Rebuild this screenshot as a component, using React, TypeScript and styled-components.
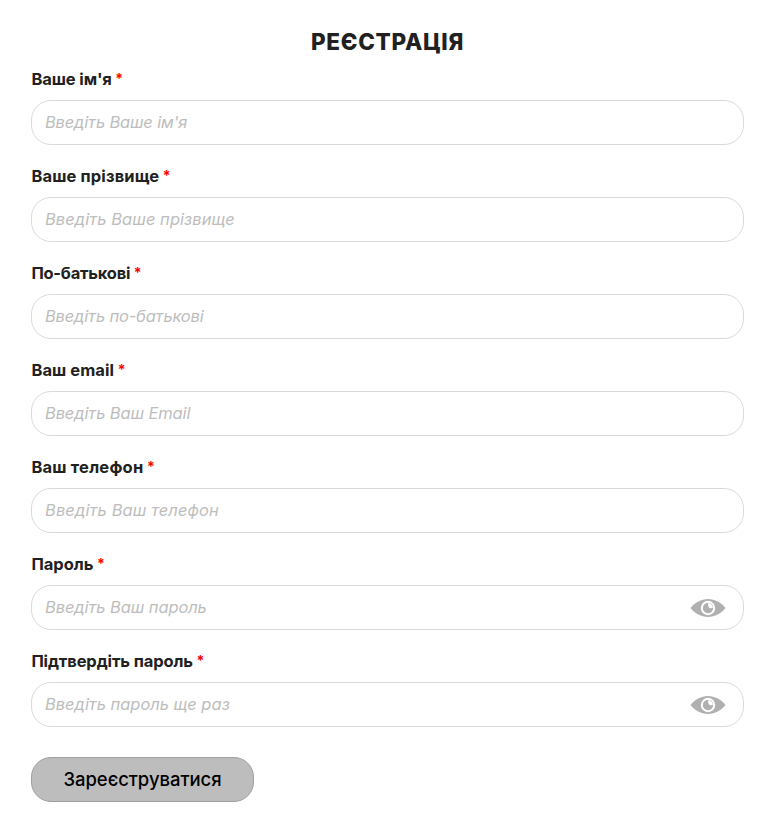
import React from "react";
import styled, { createGlobalStyle } from "styled-components";

const GlobalStyle = createGlobalStyle`
  *, *::before, *::after { box-sizing: border-box; }
  body {
    margin: 0;
    background: #fff;
    color: #212121;
    font-family: Inter, "Noto Sans", sans-serif;
  }
`;

const Form = styled.form`
  display: flex;
  flex-direction: column;
  width: 762px;
  height: 832px;
  padding: 27px 18px 0 31px;
`;

const Title = styled.h1`
  margin: 0;
  height: 30px;
  line-height: 29px;
  font-size: 22.5px;
  font-weight: 850;
  text-align: center;
  white-space: nowrap;
  letter-spacing: 0.7px;
`;

const Field = styled.div`
  display: flex;
  flex-direction: column;
  height: 97px;
`;

const Label = styled.label<{ $spacing: number }>`
  display: flex;
  gap: 3.5px;
  height: 43px;
  padding: 10px 0 0 0.4px;
  line-height: 24px;
  font-size: 16.5px;
  font-weight: 650;
  white-space: nowrap;
  letter-spacing: ${(p) => p.$spacing}px;
`;

const Required = styled.span`
  color: #ff0000;
  font-size: 14px;
  line-height: 23px;
  letter-spacing: 0;
`;

const InputBox = styled.div`
  display: flex;
  align-items: center;
  height: 45px;
  padding: 0 17px 0 13px;
  border: 1px solid #dadada;
  border-radius: 20px;
  background: #fff;
`;

const Input = styled.input<{ $spacing: number }>`
  flex: 1;
  min-width: 0;
  height: 43px;
  padding: 0 0 2px;
  border: 0;
  outline: 0;
  background: transparent;
  color: #212121;
  font-family: inherit;
  font-size: 16.5px;
  letter-spacing: ${(p) => p.$spacing}px;

  &::placeholder {
    color: #bdbdbd;
    opacity: 1;
    font-style: italic;
    font-weight: 400;
  }
`;

const EyeButton = styled.button`
  display: flex;
  padding: 0;
  border: 0;
  background: none;
`;

const Submit = styled.button`
  align-self: flex-start;
  width: 223px;
  height: 45px;
  margin-top: 21px;
  padding: 0 0 2px;
  border: 1px solid #a0a0a0;
  border-radius: 20px;
  background: #bdbdbd;
  color: #000;
  font-family: inherit;
  font-size: 18.5px;
  font-weight: 550;
  letter-spacing: -0.05px;
`;

const Eye = () => (
  <svg width="36" height="20" viewBox="0 0 36 20" fill="none" aria-hidden="true">
    <path d="M.5 10C5 4.500 11 1 18 1s13 3.500 17.500 9C31 15.500 25 19 18 19S5 15.500.5 10Z" fill="#b0b0b0" />
    <circle cx="18" cy="10" r="7.200" fill="#fff" />
    <path d="M18.800 5A5.200 5.200 0 1 0 23.100 9.200 2.600 2.600 0 0 1 18.500 8.400 2.600 2.600 0 0 1 18.800 5Z" fill="#b0b0b0" />
    <path d="M19.800 5A5.200 5.200 0 0 1 23.100 9.200" stroke="#b0b0b0" strokeWidth=".5" />
  </svg>
);

type FieldData = {
  id: string;
  label: string;
  hint: string;
  type: string;
  labelSpacing: number;
  hintSpacing: number;
};

const fields: FieldData[] = [
  { id: "name", label: "Ваше ім'я", hint: "Введіть Ваше ім'я", type: "text", labelSpacing: -0.1, hintSpacing: -0.18 },
  { id: "surname", label: "Ваше прізвище", hint: "Введіть Ваше прізвище", type: "text", labelSpacing: 0.14, hintSpacing: 0.05 },
  { id: "patronymic", label: "По-батькові", hint: "Введіть по-батькові", type: "text", labelSpacing: -0.24, hintSpacing: -0.18 },
  { id: "email", label: "Ваш email", hint: "Введіть Ваш Email", type: "email", labelSpacing: 0.08, hintSpacing: -0.13 },
  { id: "phone", label: "Ваш телефон", hint: "Введіть Ваш телефон", type: "tel", labelSpacing: 0.22, hintSpacing: 0.1 },
  { id: "password", label: "Пароль", hint: "Введіть Ваш пароль", type: "password", labelSpacing: -0.02, hintSpacing: -0.1 },
  { id: "confirm", label: "Підтвердіть пароль", hint: "Введіть пароль ще раз", type: "password", labelSpacing: -0.12, hintSpacing: -0.03 },
];

export default function App() {
  return (
    <>
      <GlobalStyle />
      <Form>
        <Title>РЕЄСТРАЦІЯ</Title>
        {fields.map((f) => (
          <Field key={f.id}>
            <Label htmlFor={f.id} $spacing={f.labelSpacing}>
              {f.label}
              <Required>*</Required>
            </Label>
            <InputBox>
              <Input id={f.id} type={f.type} placeholder={f.hint} $spacing={f.hintSpacing} />
              {f.type === "password" && (
                <EyeButton type="button" aria-label="Показати пароль">
                  <Eye />
                </EyeButton>
              )}
            </InputBox>
          </Field>
        ))}
        <Submit type="button">Зареєструватися</Submit>
      </Form>
    </>
  );
}
